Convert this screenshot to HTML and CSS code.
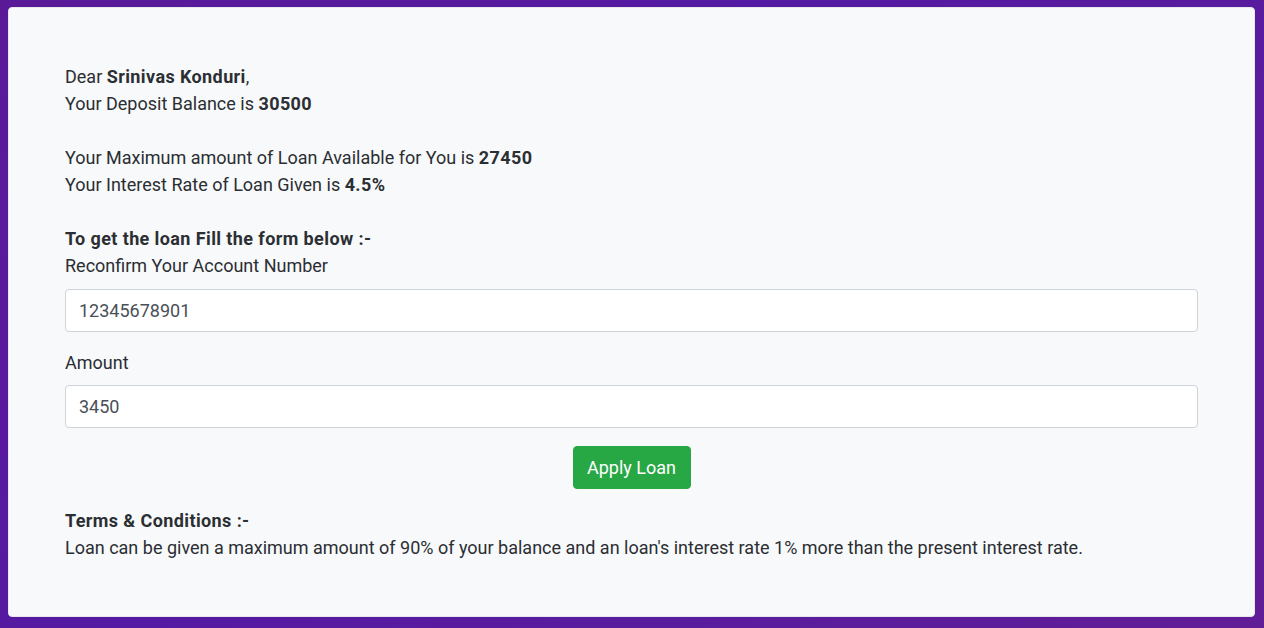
FILE: index.html
```html
<!DOCTYPE html>
<html lang="en">
<head>
<meta charset="utf-8">
<title>Apply Loan</title>
<link rel="stylesheet" href="styles.css">
</head>
<body>
<main class="page">
  <section class="card">
    <p class="block">Dear <b>Srinivas Konduri</b>,<br>Your Deposit Balance is <b>30500</b></p>
    <p class="block">Your Maximum amount of Loan Available for You is <b>27450</b><br>Your Interest Rate of Loan Given is <b>4.5%</b></p>
    <form class="loan-form">
      <div class="form-title"><b>To get the loan Fill the form below :-</b></div>
      <label class="field">
        <span class="label">Reconfirm Your Account Number</span>
        <input class="control" type="text" value="12345678901">
      </label>
      <label class="field">
        <span class="label">Amount</span>
        <input class="control" type="text" value="3450">
      </label>
      <div class="actions"><button class="btn" type="button">Apply Loan</button></div>
    </form>
    <div class="terms">
      <b>Terms &amp; Conditions :-</b><br>
      Loan can be given a maximum amount of 90% of your balance and an loan's interest rate 1% more than the present interest rate.
    </div>
  </section>
</main>
</body>
</html>
```

FILE: styles.css
```css
* { box-sizing: border-box; }
html, body { margin: 0; height: 100%; }
body {
  font-family: Roboto, "Noto Sans", sans-serif;
  font-size: 18px;
  line-height: 27px;
  color: #2a2e33;
  background: linear-gradient(135deg, #5a1a98 0%, #551aa3 40%, #5a1c9e 70%, #611d96 100%);
}
.page {
  padding: 7px 9px 11px 8px;
}
.card {
  background: #f8f9fa;
  border: 1px solid #e6e8ec;
  border-radius: 4px;
  padding: 55px 56px 55px 56px;
  height: 610px;
}
.block { margin: 0 0 27px 0; }
b { font-weight: 700; color: #2b2f33; letter-spacing: 0.4px; }
.loan-form { display: flex; flex-direction: column; }
.field { display: flex; flex-direction: column; margin-bottom: 17px; }
.label { display: block; margin-bottom: 10px; }
.control {
  font: inherit;
  font-size: 18px;
  line-height: 27px;
  height: 43px;
  padding: 7px 13px;
  color: #495057;
  background: #fff;
  border: 1px solid #ced4da;
  border-radius: 4px;
  width: 100%;
}
.field + .field .label { margin-bottom: 9px; }
.field:last-of-type { margin-bottom: 18px; }
.actions { display: flex; justify-content: center; margin-bottom: 18px; }
.btn {
  font: inherit;
  font-size: 18px;
  line-height: 27px;
  color: #fff;
  background: #28a745;
  border: 1px solid #28a745;
  border-radius: 4px;
  padding: 7px 0;
  height: 43px;
  width: 118px;
  white-space: nowrap;
  text-align: center;
}
.terms { margin: 0; }
```
